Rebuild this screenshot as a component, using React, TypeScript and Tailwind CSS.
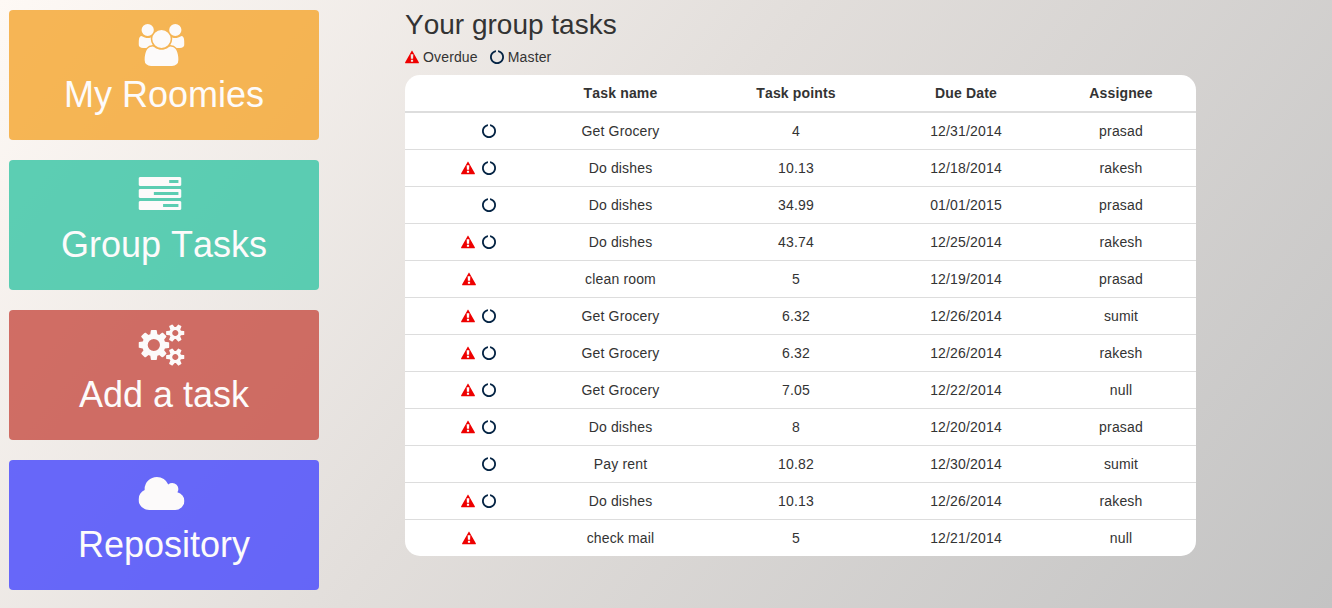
import React from "react";

const USERS =
  "M593 896q-162 5-265 128h-134q-82 0-138-40.5t-56-118.5q0-353 124-353 6 0 43.5 21t97.5 42.5 119 21.5q67 0 133-23-5 37-5 66 0 139 81 256zm1071 637q0 120-73 189.5t-194 69.5h-874q-121 0-194-69.5t-73-189.5q0-53 3.5-103.5t14-109 26.5-108.5 43-97.5 62-81 85.5-53.5 111.5-20q10 0 43 21.5t73 48 107 48 135 21.5 135-21.5 107-48 73-48 43-21.5q61 0 111.5 20t85.5 53.5 62 81 43 97.5 26.5 108.5 14 109 3.5 103.5zm-1024-1277q0 106-75 181t-181 75-181-75-75-181 75-181 181-75 181 75 75 181zm704 384q0 159-112.5 271.5t-271.5 112.5-271.5-112.5-112.5-271.5 112.5-271.5 271.5-112.5 271.5 112.5 112.5 271.5zm576 225q0 78-56 118.5t-138 40.5h-134q-103-123-265-128 81-117 81-256 0-29-5-66 66 23 133 23 59 0 119-21.5t97.5-42.5 43.5-21q124 0 124 353zm-128-609q0 106-75 181t-181 75-181-75-75-181 75-181 181-75 181 75 75 181z";
const TASKS =
  "M1024 1408h640v-128h-640v128zm-384-512h1024v-128h-1024v128zm640-512h384v-128h-384v128zm512 832v256q0 26-19 45t-45 19h-1664q-26 0-45-19t-19-45v-256q0-26 19-45t45-19h1664q26 0 45 19t19 45zm0-512v256q0 26-19 45t-45 19h-1664q-26 0-45-19t-19-45v-256q0-26 19-45t45-19h1664q26 0 45 19t19 45zm0-512v256q0 26-19 45t-45 19h-1664q-26 0-45-19t-19-45v-256q0-26 19-45t45-19h1664q26 0 45 19t19 45z";
const COGS =
  "M896 896q0-106-75-181t-181-75-181 75-75 181 75 181 181 75 181-75 75-181zm768 512q0-52-38-90t-90-38-90 38-38 90q0 53 37.5 90.5t90.5 37.5 90.5-37.5 37.5-90.5zm0-1024q0-52-38-90t-90-38-90 38-38 90q0 53 37.5 90.5t90.5 37.5 90.5-37.5 37.5-90.5zm-384 421v185q0 10-7 19.5t-16 10.5l-155 24q-11 35-32 76 34 48 90 115 7 11 7 20 0 12-7 19-23 30-82.5 89.5t-78.5 59.5q-11 0-21-7l-115-90q-37 19-77 31-11 108-23 155-7 24-30 24h-186q-11 0-20-7.5t-10-17.5l-23-153q-34-10-75-31l-118 89q-7 7-20 7-11 0-21-8-144-133-144-160 0-9 7-19 10-14 41-53t47-61q-23-44-35-82l-152-24q-10-1-17-9.5t-7-19.5v-185q0-10 7-19.5t16-10.5l155-24q11-35 32-76-34-48-90-115-7-11-7-20 0-12 7-20 22-30 82-89t79-59q11 0 21 7l115 90q34-18 77-32 11-108 23-154 7-24 30-24h186q11 0 20 7.5t10 17.5l23 153q34 10 75 31l118-89q8-7 20-7 11 0 21 8 144 133 144 160 0 8-7 19-12 16-42 54t-45 60q23 48 34 82l152 23q10 2 17 10.5t7 19.5zm640 533v140q0 16-149 31-12 27-30 52 51 113 51 138 0 4-4 7-122 71-124 71-8 0-46-47t-52-68q-20 2-30 2t-30-2q-14 21-52 68t-46 47q-2 0-124-71-4-3-4-7 0-25 51-138-18-25-30-52-149-15-149-31v-140q0-16 149-31 13-29 30-52-51-113-51-138 0-4 4-7 4-2 35-20t59-34 30-16q8 0 46 46.5t52 67.5q20-2 30-2t30 2q51-71 92-112l6-2q4 0 124 70 4 3 4 7 0 25-51 138 17 23 30 52 149 15 149 31zm0-1024v140q0 16-149 31-12 27-30 52 51 113 51 138 0 4-4 7-122 71-124 71-8 0-46-47t-52-68q-20 2-30 2t-30-2q-14 21-52 68t-46 47q-2 0-124-71-4-3-4-7 0-25 51-138-18-25-30-52-149-15-149-31v-140q0-16 149-31 13-29 30-52-51-113-51-138 0-4 4-7 4-2 35-20t59-34 30-16q8 0 46 46.5t52 67.5q20-2 30-2t30 2q51-71 92-112l6-2q4 0 124 70 4 3 4 7 0 25-51 138 17 23 30 52 149 15 149 31z";
const CLOUD =
  "M1920 1152q0 159-112.5 271.5t-271.5 112.5h-1088q-185 0-316.5-131.5t-131.5-316.5q0-132 71-241.5t187-163.5q-2-28-2-43 0-212 150-362t362-150q158 0 286.5 88t187.5 230q70-62 166-62 106 0 181 75t75 181q0 75-41 138 129 30 213 134.5t84 239.5z";
const WARNING =
  "M6.6.9Q7 .2 7.4.9L13.8 12.2Q14.2 13.3 13.2 13.3H.8Q-.2 13.3.2 12.2ZM5.7 4.2L5.9 8.8H8.1L8.3 4.2ZM5.9 9.8V11.7H8.1V9.8Z";
const NOTCH =
  "M1760 896q0 176-68.5 336t-184 275.5-275.5 184-336 68.5-336-68.5-275.5-184-184-275.5-68.5-336q0-213 97-398.5t265-305.5 374-151v228q-221 45-366.5 221t-145.5 406q0 130 51 248.5t136.5 204 204 136.5 248.5 51 248.5-51 204-136.5 136.5-204 51-248.5q0-230-145.5-406t-366.5-221v-228q206 31 374 151t265 305.5 97 398.5z";

const menu = [
  { label: "My Roomies", path: USERS, bg: "bg-[#f4a938]/85", box: "0 0 1920 1792", size: "w-[46px]" },
  { label: "Group Tasks", path: TASKS, bg: "bg-[#41c7a8]/85", box: "0 0 1792 1792", size: "w-[43px] mr-[3px]" },
  { label: "Add a task", path: COGS, bg: "bg-[#c9564c]/85", box: "0 0 1920 1792", size: "w-[46px]" },
  { label: "Repository", path: CLOUD, bg: "bg-[#4f50fb]/85", box: "0 0 1920 1792", size: "w-[46px]" },
];

type Task = { overdue: boolean; master: boolean; cells: string[] };
const tasks: Task[] = [
  { overdue: false, master: true, cells: ["Get Grocery", "4", "12/31/2014", "prasad"] },
  { overdue: true, master: true, cells: ["Do dishes", "10.13", "12/18/2014", "rakesh"] },
  { overdue: false, master: true, cells: ["Do dishes", "34.99", "01/01/2015", "prasad"] },
  { overdue: true, master: true, cells: ["Do dishes", "43.74", "12/25/2014", "rakesh"] },
  { overdue: true, master: false, cells: ["clean room", "5", "12/19/2014", "prasad"] },
  { overdue: true, master: true, cells: ["Get Grocery", "6.32", "12/26/2014", "sumit"] },
  { overdue: true, master: true, cells: ["Get Grocery", "6.32", "12/26/2014", "rakesh"] },
  { overdue: true, master: true, cells: ["Get Grocery", "7.05", "12/22/2014", "null"] },
  { overdue: true, master: true, cells: ["Do dishes", "8", "12/20/2014", "prasad"] },
  { overdue: false, master: true, cells: ["Pay rent", "10.82", "12/30/2014", "sumit"] },
  { overdue: true, master: true, cells: ["Do dishes", "10.13", "12/26/2014", "rakesh"] },
  { overdue: true, master: false, cells: ["check mail", "5", "12/21/2014", "null"] },
];

function Overdue() {
  return (
    <svg viewBox="0 0 14 14" className="h-[14px] w-[14px] shrink-0 fill-[#ee0000]">
      <path fillRule="evenodd" d={WARNING} />
    </svg>
  );
}

function Master() {
  return (
    <svg viewBox="32 20 1728 1740" preserveAspectRatio="none" className="h-[14px] w-[14px] shrink-0 fill-[#052444]">
      <path d={NOTCH} />
    </svg>
  );
}

function iconPadding(t: Task) {
  if (t.overdue && t.master) return "pl-[56px]";
  return t.overdue ? "pl-[57px]" : "pl-[77px]";
}

const GRID = "grid grid-cols-[130px_171px_180px_160px_150px] items-center text-center";

export default function App() {
  return (
    <div className="flex h-[608px] w-[1332px] overflow-hidden bg-[linear-gradient(128deg,#fef9f5_0%,#e2dedb_45%,#c3c3c3_100%)] font-['Liberation_Sans',Arial,sans-serif] text-sm text-[#333] [font-kerning:none]">
      <nav className="ml-[9px] mt-[10px] flex w-[310px] flex-col gap-5">
        {menu.map((m) => (
          <a key={m.label} className={`flex h-[130px] flex-col items-center rounded ${m.bg}`}>
            <svg
              viewBox={m.box}
              preserveAspectRatio="none"
              className={`mt-[14px] h-[42px] -translate-x-[2.5px] fill-[#fcfafa] ${m.size}`}
            >
              <path d={m.path} />
            </svg>
            <span className="mt-[9px] text-[36px] leading-10 text-[#fdfbfb]">{m.label}</span>
          </a>
        ))}
      </nav>
      <main className="ml-[86px] w-[791px]">
        <h1 className="mt-[9px] text-[28px] leading-[31px]">Your group tasks</h1>
        <div className="mt-[7px] flex h-5 items-center">
          <Overdue />
          <span className="ml-1 tracking-[0.15px]">Overdue</span>
          <span className="ml-3 flex items-center">
            <Master />
            <span className="ml-1 tracking-[0.15px]">Master</span>
          </span>
        </div>
        <div className="mt-2 overflow-hidden rounded-[15px] bg-white tracking-[0.16px]">
          <div className={`h-[38px] border-b-2 border-[#ddd] font-bold ${GRID}`}>
            <span />
            <span>Task name</span>
            <span>Task points</span>
            <span>Due Date</span>
            <span>Assignee</span>
          </div>
          {tasks.map((t, i) => (
            <div key={i} className={`${i === tasks.length - 1 ? "h-[36px]" : "h-[37px] border-b border-[#ddd]"} ${GRID}`}>
              <span className={`flex gap-[7px] ${iconPadding(t)}`}>
                {t.overdue && <Overdue />}
                {t.master && <Master />}
              </span>
              {t.cells.map((c, j) => (
                <span key={j}>{c}</span>
              ))}
            </div>
          ))}
        </div>
      </main>
    </div>
  );
}
